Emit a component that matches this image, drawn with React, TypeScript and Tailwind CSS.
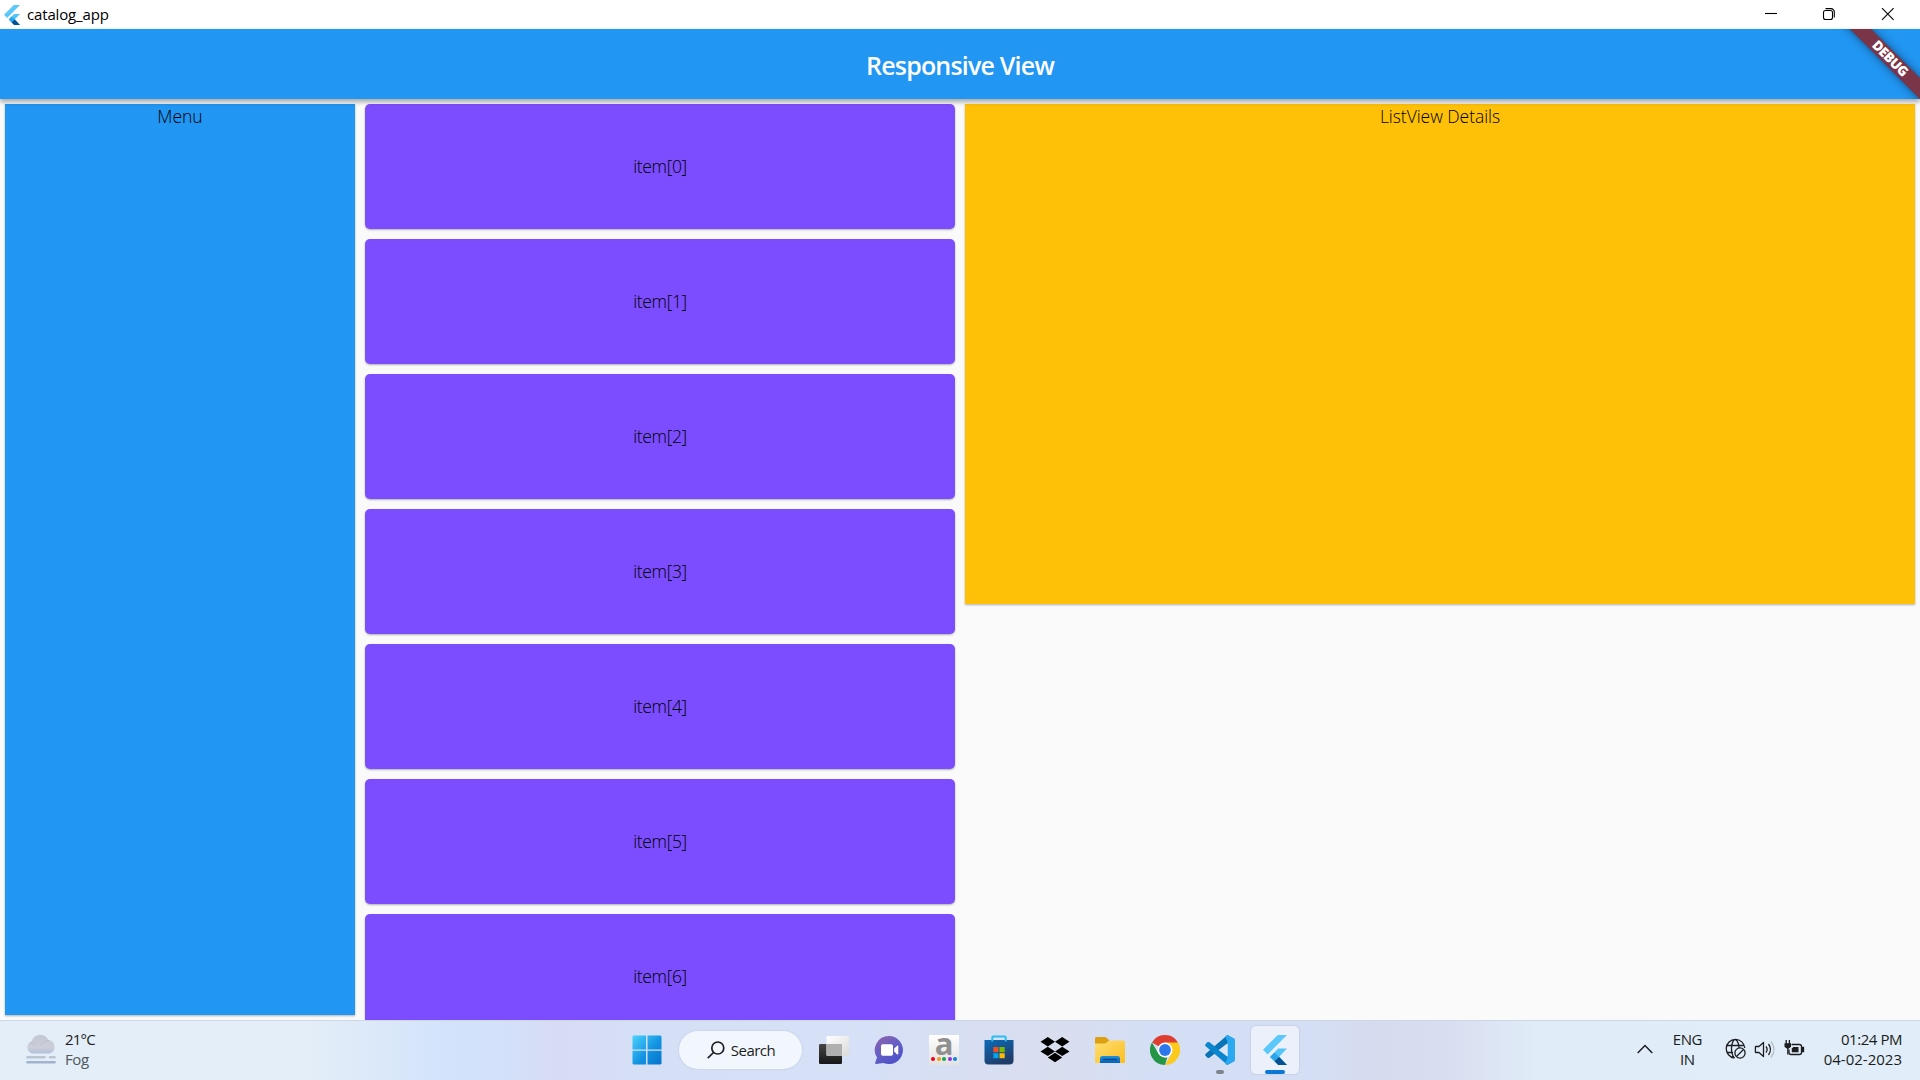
import React from "react";

function FlutterLogo({ className, id }: { className: string; id: string }) {
  return (
    <svg className={className} viewBox="0 0 24 30" preserveAspectRatio="none">
      <defs>
        <linearGradient id={id} x1="0" y1="0" x2="1" y2="1">
          <stop offset="0" stopColor="#0b4a8a" />
          <stop offset="1" stopColor="#01579b" />
        </linearGradient>
      </defs>
      <path d="M14.8 0H24L4.6 19.4 0 14.8z" fill="#5bc8fb" />
      <path d="M15.2 13.6H24L16.4 21.4 24 30H15.2L7 21.9z" fill="#54c5f8" />
      <path d="M7 21.9l4.5-4.5 4.6 4.5-4.6 4.4z" fill="#29a6ea" />
      <path d="M11.5 26.3l4.6-4.4L24 30H15.2z" fill={`url(#${id})`} />
    </svg>
  );
}

function TitleBar() {
  return (
    <div className="flex h-[29px] shrink-0 items-center bg-white pl-1">
      <FlutterLogo className="h-5 w-4 shrink-0" id="flTitle" />
      <span className="mb-0.5 ml-[7px] text-[15px] leading-5 tracking-[-0.15px] text-black">catalog_app</span>
      <svg className="ml-auto h-[29px] w-[156px]" viewBox="0 0 156 29" fill="none" stroke="#000" strokeWidth="1.1">
        <path d="M1 13.5h12" />
        <path d="M62.5 10.5h-1a2 2 0 0 0-2 2v5a2 2 0 0 0 2 2h5a2 2 0 0 0 2-2v-5a2 2 0 0 0-2-2zM61.5 8.6h5.5a3.3 3.3 0 0 1 3.3 3.3v5.5" />
        <path d="M118 8.2l11.6 11.6M129.600 8.2L118 19.800" />
      </svg>
    </div>
  );
}

function AppBar() {
  return (
    <header className="relative z-10 flex h-[70px] shrink-0 items-center justify-center bg-[#2196f3] shadow-[0_2px_5px_rgba(0,0,0,0.25),0_4px_4px_rgba(0,0,0,0.12)]">
      <h1 className="mt-0.5 text-[25px] leading-8 font-semibold tracking-[-0.8px] text-white">Responsive View</h1>
      <div className="absolute top-0 right-0 h-[70px] w-[100px] overflow-hidden">
        <div className="absolute top-[22px] left-[-10px] flex h-[15px] w-[160px] rotate-45 items-center justify-center bg-[#7b3548] text-[13.5px] leading-none font-extrabold tracking-[-0.5px] text-white shadow-[0_0_8px_rgba(0,0,0,0.5)]">
          DEBUG
        </div>
      </div>
    </header>
  );
}

function Content() {
  const cardShadow = "shadow-[0_1px_2px_rgba(0,0,0,0.3)]";
  return (
    <main className="flex min-h-0 flex-1 gap-2.5 overflow-hidden bg-[#fafafa] px-[5px] pt-[5px] text-[17.5px] leading-6 font-light text-black">
      <section className={`mb-[5px] w-[350px] shrink-0 bg-[#2196f3] text-center ${cardShadow}`}>Menu</section>
      <section className="flex w-[590px] shrink-0 flex-col gap-2.5">
        {[0, 1, 2, 3, 4, 5, 6].map((i) => (
          <div key={i} className={`flex h-[125px] shrink-0 items-center justify-center rounded-[5px] bg-[#7c4dff] pb-0.5 tracking-[-0.35px] ${cardShadow}`}>
            item[{i}]
          </div>
        ))}
      </section>
      <section className={`h-[500px] flex-1 bg-[#ffc107] text-center tracking-[-0.05px] ${cardShadow}`}>ListView Details</section>
    </main>
  );
}

function WindowsIcon() {
  return (
    <svg className="h-[30px] w-[30px]" viewBox="0 0 30 30">
      <defs>
        <linearGradient id="win" x1="0" y1="0" x2="1" y2="1">
          <stop offset="0" stopColor="#4cd3fb" />
          <stop offset=".55" stopColor="#1393e2" />
          <stop offset="1" stopColor="#0673cc" />
        </linearGradient>
      </defs>
      <path fill="url(#win)" d="M1.500.5H14v14H.5v-13zM15.500.5h13l1 1v13h-14zM.5 15.700H14v13.800H1.500l-1-1zM15.500 15.700h14v12.800l-1 1h-13z" />
    </svg>
  );
}

function TaskViewIcon() {
  return (
    <svg className="h-[30px] w-[30px]" viewBox="0 0 30 30">
      <defs>
        <linearGradient id="tvd" x1="0" y1="0" x2="0" y2="1">
          <stop offset="0" stopColor="#454545" />
          <stop offset="1" stopColor="#171717" />
        </linearGradient>
        <linearGradient id="tvl" x1="0" y1="0" x2="1" y2="1">
          <stop offset="0" stopColor="#fff" />
          <stop offset="1" stopColor="#dadada" />
        </linearGradient>
      </defs>
      <rect x="0" y="9" width="23" height="20" rx="1.200" fill="url(#tvd)" />
      <rect x="7.500" y="1" width="22.500" height="20" rx="1.200" fill="url(#tvl)" />
      <path d="M7.500 9H23v12H8.700q-1.200 0-1.200-1.200z" fill="#b0b0b0" />
    </svg>
  );
}

function ChatIcon() {
  return (
    <svg className="h-[30px] w-[30px]" viewBox="0 0 30 30">
      <defs>
        <linearGradient id="chat" x1=".1" y1="0" x2=".7" y2="1">
          <stop offset="0" stopColor="#8d62ac" />
          <stop offset=".5" stopColor="#6560c4" />
          <stop offset="1" stopColor="#4c50c8" />
        </linearGradient>
      </defs>
      <path d="M15 1a14 14 0 1 1-5.500 26.900L2 29c-1 0-1-.8-.7-1.500L3 22.500A14 14 0 0 1 15 1z" fill="url(#chat)" />
      <rect x="7" y="9.200" width="12" height="11.600" rx="1.800" fill="#fff" />
      <path d="M20.200 13.500l3-2.800c.5-.4 1.100-.2 1.100.5v7.700c0 .7-.6.900-1.100.5l-3-2.800z" fill="#fff" />
    </svg>
  );
}

function AmazonIcon() {
  return (
    <div className="flex h-[30px] w-[30px] flex-col items-center bg-linear-to-b from-white to-[#e2e2e2]">
      <div className="h-[22px] text-[31px] leading-[16px] font-bold text-[#909090]">a</div>
      <div className="flex gap-[1.500px]">
        <i className="size-1 rounded-full bg-[#f00016]" />
        <i className="size-1 rounded-full bg-[#f59a1b]" />
        <i className="size-1 rounded-full bg-[#17a55a]" />
        <i className="size-1 rounded-full bg-[#9032dc]" />
        <i className="size-1 rounded-full bg-[#0788dd]" />
      </div>
    </div>
  );
}

function StoreIcon() {
  return (
    <svg className="h-[30px] w-[30px]" viewBox="0 0 30 30">
      <defs>
        <linearGradient id="store" x1="0" y1="0" x2=".5" y2="1">
          <stop offset="0" stopColor="#0b6cba" />
          <stop offset="1" stopColor="#203c68" />
        </linearGradient>
      </defs>
      <path d="M.5 5h29v20.500a4 4 0 0 1-4 4h-21a4 4 0 0 1-4-4z" fill="url(#store)" />
      <path d="M8.300 6.500V2.500q0-1 1-1h11.400q1 0 1 1v4" fill="none" stroke="#28bfee" strokeWidth="2" />
      <path d="M9.300 12h5.200v5.200H9.300z" fill="#f25022" />
      <path d="M15.500 12h5.200v5.200h-5.200z" fill="#7fba00" />
      <path d="M9.300 18.200h5.200v5H9.300z" fill="#00a4ef" />
      <path d="M15.500 18.200h5.200v5h-5.200z" fill="#ffb900" />
    </svg>
  );
}

function DropboxIcon() {
  return (
    <svg className="h-[30px] w-[30px]" viewBox="0 0 30 30">
      <path d="M7.800 2l7.200 4.700-7.200 4.700L.5 6.700zM22.200 2l7.300 4.700-7.300 4.700L15 6.700zM7.800 11.700l7.200 4.700-7.200 4.600-7.300-4.600zM22.200 11.700l7.300 4.700-7.300 4.600-7.200-4.600zM15 17.700l7.200 4.700L15 27.200l-7.200-4.800z" fill="#000" />
    </svg>
  );
}

function FolderIcon() {
  return (
    <svg className="h-[30px] w-[30px]" viewBox="0 0 30 30">
      <defs>
        <linearGradient id="fold" x1="0" y1="0" x2="1" y2="1">
          <stop offset="0" stopColor="#ffdf73" />
          <stop offset="1" stopColor="#fbbd20" />
        </linearGradient>
        <linearGradient id="foldb" x1="0" y1="0" x2="0" y2="1">
          <stop offset="0" stopColor="#1b91df" />
          <stop offset="1" stopColor="#0a62b5" />
        </linearGradient>
      </defs>
      <path d="M0 12V3.500Q0 2 1.500 2h8.300q.8 0 1.400.5L14 5v7z" fill="#dda012" />
      <path d="M0 8.500h9.500q1 0 1.800-.7L13.500 6q.6-.5 1.500-.5h13.500Q30 5.500 30 7v20q0 1-1 1H1q-1 0-1-1z" fill="url(#fold)" />
      <path d="M5 28v-4.500q0-2.500 2.500-2.500h15q2.500 0 2.500 2.500V28z" fill="url(#foldb)" />
      <path d="M8.500 24.500h13" stroke="#0b4a86" strokeWidth="1.400" strokeLinecap="round" />
    </svg>
  );
}

function ChromeIcon() {
  return (
    <svg className="h-[30px] w-[30px]" viewBox="0 0 30 30">
      <path d="M15 15L2 7.500A15 15 0 0 1 28 7.500z" fill="#de3d32" />
      <path d="M15 7.500H28A15 15 0 0 1 15 30l6.500-11.250z" fill="#fcc91d" />
      <path d="M2 7.500l6.500 11.250 6.500 3.750h2.200L15 30A15 15 0 0 1 2 7.500z" fill="#249447" />
      <circle cx="15" cy="15" r="7.500" fill="#fff" />
      <circle cx="15" cy="15" r="5.900" fill="#2d77ec" />
    </svg>
  );
}

function VsCodeIcon() {
  return (
    <svg className="h-[30px] w-[30px]" viewBox="0 0 30 30">
      <path d="M.7 18.800c-.7.7-.7 1.600 0 2.300l1.800 1.600c.6.500 1.300.5 1.900.1L29 4 22.500 0z" fill="#0873b7" />
      <path d="M.7 11.200c-.7-.7-.7-1.600 0-2.300l1.800-1.600c.6-.5 1.300-.5 1.900-.1L29 26l-6.500 4z" fill="#0a86ce" />
      <path d="M22.200 29.800c-1.200.2-2-.7-2-1.700l2.300-5V6.900l-2-5C20.500.8 21.500 0 22.500.2l6.200 3q1.300.6 1.300 2v19.600q0 1.400-1.300 2z" fill="#2aa9f0" />
      <path d="M22.500 8.200v13.600L13.600 15z" fill="#dce5f6" />
    </svg>
  );
}

function WeatherIcon() {
  return (
    <svg className="h-[30px] w-[30px]" viewBox="0 0 30 30">
      <defs>
        <linearGradient id="cloud" x1="0" y1="0" x2="0" y2="1">
          <stop offset="0" stopColor="#c2c8d3" />
          <stop offset=".65" stopColor="#cccfd7" />
          <stop offset="1" stopColor="#b4c0df" />
        </linearGradient>
      </defs>
      <path d="M6.500 19.500A6.300 6.300 0 0 1 5.500 7.400 9.200 9.200 0 0 1 22.400 6 6.900 6.900 0 0 1 23.500 19.500z" fill="url(#cloud)" />
      <path d="M9 10.500q-2-2.500-5-2M15 11q2.500-4.500 8-4.400" stroke="#adb6cb" fill="none" opacity=".6" />
      <path d="M1.500 23.200h17M24 23.200h4.500" stroke="#b9c5d4" strokeWidth="2.600" strokeLinecap="round" />
      <path d="M1.500 28.200h27" stroke="#a2b2cf" strokeWidth="2.600" strokeLinecap="round" />
    </svg>
  );
}

function TrayIcons() {
  return (
    <svg className="h-6 w-[82px]" viewBox="0 0 82 24" fill="none" stroke="#1b1d20" strokeWidth="1.300">
      <path d="M9.500 21A9.300 9.300 0 1 1 19.800 11M1.500 8.500h17M1.500 15.500H8M9.500 21c-4-4-4-14.500 0-18.500M10.500 2.500c2 1.500 3.400 4.500 3.600 8.500" />
      <circle cx="15" cy="16" r="5.100" />
      <path d="M11.500 19.500l7-7" />
      <path d="M31 9.500h3l4.500-4v14l-4.500-4h-3q-.6 0-.6-.6V10q0-.5.600-.5z" strokeLinejoin="round" />
      <path d="M41 9.500q2.300 3 0 6M43.500 7q4 5.500 0 11" />
      <path d="M46 4.500q6 8 0 16" stroke="#b3bdc7" />
      <path d="M66.500 7.500h8q2 0 2 2v6q0 2-2 2H66q-2 0-2-2v-3" />
      <path d="M66.800 11.500l1.500-1.500H73.500v5.200h-6.700z" fill="#1b1d20" stroke="none" />
      <path d="M77.200 10.500h1.300v4h-1.300z" fill="#1b1d20" />
      <path d="M59.500 6.200h6.500v3.300q-1 2-3.200 2.200-2.300-.2-3.300-2.200z" fill="#1b1d20" stroke="none" />
      <path d="M61.200 3v4M64.400 3v4M62.800 11v6.500" />
    </svg>
  );
}

function Slot({ children, mark, active }: { children: React.ReactNode; mark?: string; active?: boolean }) {
  return (
    <div className={`relative flex h-12 w-12 items-center justify-center ${active ? "rounded-[5px] bg-[#ecf0fa] shadow-[0_0_1px_1px_rgba(190,200,225,0.5)]" : ""}`}>
      {children}
      {mark && <span className={`absolute bottom-0 h-1 rounded-full ${mark}`} />}
    </div>
  );
}

function Taskbar() {
  return (
    <footer className="relative flex h-[60px] shrink-0 items-center justify-center border-t border-[#ccd6e5] bg-[linear-gradient(90deg,#e3eef8_0%,#e3eef8_16%,#dbe8f9_20%,#d2e3fb_23%,#d3e1fa_26%,#d7dcf4_29%,#d5dff5_33%,#d6e0f6_45%,#d9deef_55%,#d4dff5_60%,#d4dff5_68%,#d6dbee_72%,#d8ddef_75%,#e0ecf8_80%,#e1edf8_100%)] pb-0.5 text-[#1b1d20]">
      <div className="absolute bottom-[11px] left-[26px] flex items-center gap-[9px] text-[15px] leading-5">
        <WeatherIcon />
        <div>
          <div className="tracking-[-0.8px]">21°C</div>
          <div className="tracking-[-0.4px] text-[#51565c]">Fog</div>
        </div>
      </div>
      <div className="mr-[-4px] flex items-center">
        <div className="flex w-[55px] items-center pl-[7px]">
          <WindowsIcon />
        </div>
        <div className="mr-2 ml-[-1px] flex h-[38px] w-[123px] items-center rounded-full bg-[#f2f6fd] pl-[28px] shadow-[0_0_1px_1px_rgba(190,205,235,0.45)]">
          <svg className="h-[18px] w-[18px]" viewBox="0 0 18 18" fill="none" stroke="#1b1d20" strokeWidth="1.700">
            <circle cx="10.800" cy="7" r="6" />
            <path d="M6.500 11.500L.8 17.200" />
          </svg>
          <span className="ml-1.5 text-[15px] leading-5 tracking-[-0.5px]">Search</span>
        </div>
        <div className="flex gap-[7.200px]">
          <Slot><TaskViewIcon /></Slot>
          <Slot><ChatIcon /></Slot>
          <Slot><AmazonIcon /></Slot>
          <Slot><StoreIcon /></Slot>
          <Slot><DropboxIcon /></Slot>
          <Slot><FolderIcon /></Slot>
          <Slot><ChromeIcon /></Slot>
          <Slot mark="w-2 bg-[#7f858f]"><VsCodeIcon /></Slot>
          <Slot mark="w-5 bg-[#0a78d4]" active><FlutterLogo className="h-[30px] w-6" id="flTask" /></Slot>
        </div>
      </div>
      <div className="absolute right-[18px] bottom-[11px] flex items-center text-[15px] leading-5">
        <svg className="h-3 w-4" viewBox="0 0 16 12" fill="none" stroke="#1b1d20" strokeWidth="1.500">
          <path d="M.7 10L8 2.500l7.300 7.500" />
        </svg>
        <div className="ml-[20px] w-[29px] text-center tracking-[-0.4px]">
          <div>ENG</div>
          <div>IN</div>
        </div>
        <div className="ml-[23px]"><TrayIcons /></div>
        <div className="ml-[17px] text-right">
          <div className="tracking-[-0.45px]">01:24 PM</div>
          <div>04-02-2023</div>
        </div>
      </div>
    </footer>
  );
}

export default function App() {
  return (
    <div className="flex h-screen w-full flex-col overflow-hidden bg-[#fafafa] font-['Open_Sans','Noto_Sans',sans-serif]">
      <TitleBar />
      <AppBar />
      <Content />
      <Taskbar />
    </div>
  );
}
